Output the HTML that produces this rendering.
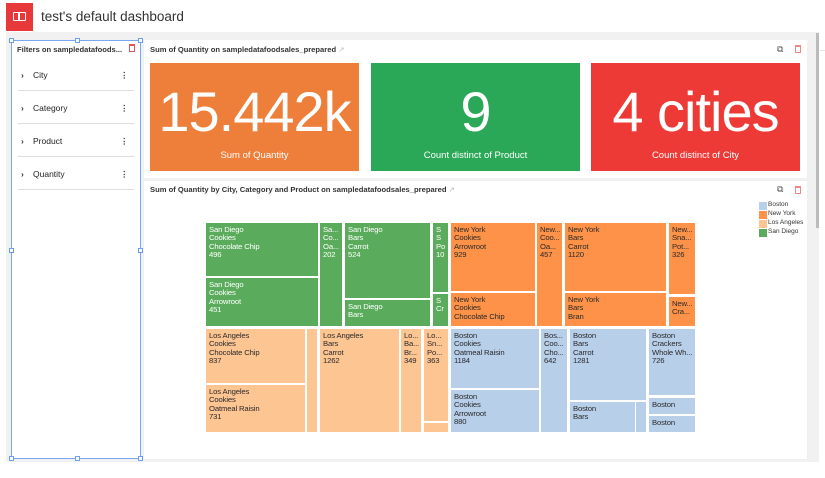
<!DOCTYPE html>
<html><head><meta charset="utf-8"><style>
*{box-sizing:border-box;margin:0;padding:0}
body{width:825px;height:478px;position:relative;background:#fff;font-family:"Liberation Sans",sans-serif;overflow:hidden;color:#222}
.a{position:absolute}
.t{position:absolute;font-size:7.7px;line-height:8.3px;color:#2a2a2a;padding:3px 0 0 3px;overflow:hidden;white-space:nowrap;letter-spacing:-0.15px}
.g{background:#5aab5c}.n{background:#fd9248}.l{background:#fdc592}.b{background:#b8cfea}
.f{position:absolute;left:18px;width:116px;height:33px;border-bottom:1px solid #ddd;font-size:8.5px;font-weight:bold;color:#333}
.f span{position:absolute;top:12px}
.h{position:absolute;width:5px;height:5px;background:#fff;border:1px solid #6aa0f0}
.kpi{position:absolute;top:63px;height:108px;color:#fff;text-align:center}
.kpi .v{font-size:56px;line-height:56px;margin-top:21px;letter-spacing:-1px}
.kpi .c{font-size:9.5px;margin-top:10px}
</style></head><body>
<div class="a" style="left:6px;top:3px;width:27px;height:28px;background:#e8393a"></div>
<div class="a" style="left:13px;top:12px;width:13px;height:9px;border:1.5px solid #fff;border-radius:1px"></div>
<div class="a" style="left:18px;top:13px;width:1.5px;height:7px;background:#fff"></div>
<div class="a" style="left:41px;top:9px;font-size:13.5px;color:#333">test's default dashboard</div>

<div class="a" style="left:6px;top:32px;width:813px;height:430px;background:#f1f1f1"></div>
<div class="a" style="left:816px;top:33px;width:3px;height:195px;background:#bbb"></div>
<div class="a" style="left:820px;top:50px;width:5px;height:1px;background:#e5e5e5"></div>

<div class="a" style="left:11px;top:40px;width:130px;height:419px;background:#fff;border:1px solid #7aa8f0"></div>
<div class="h" style="left:9px;top:38px"></div><div class="h" style="left:75px;top:38px"></div><div class="h" style="left:138px;top:38px"></div>
<div class="h" style="left:9px;top:248px"></div><div class="h" style="left:138px;top:248px"></div>
<div class="h" style="left:9px;top:456px"></div><div class="h" style="left:75px;top:456px"></div><div class="h" style="left:138px;top:456px"></div>
<div class="a" style="left:17px;top:45px;font-size:7.6px;font-weight:bold;color:#333">Filters on sampledatafoods...</div>
<div class="a" style="left:129px;top:44px;width:6px;height:8px;border:1.2px solid #e05555;border-top-width:2px"></div>
<div class="f" style="top:58px"><span style="left:3px">›</span><span style="left:15px;font-weight:normal;color:#222">City</span><span style="left:102px">⋮</span></div>
<div class="f" style="top:91px"><span style="left:3px">›</span><span style="left:15px;font-weight:normal;color:#222">Category</span><span style="left:102px">⋮</span></div>
<div class="f" style="top:124px"><span style="left:3px">›</span><span style="left:15px;font-weight:normal;color:#222">Product</span><span style="left:102px">⋮</span></div>
<div class="f" style="top:157px"><span style="left:3px">›</span><span style="left:15px;font-weight:normal;color:#222">Quantity</span><span style="left:102px">⋮</span></div>

<div class="a" style="left:144px;top:40px;width:663px;height:138px;background:#fff"></div>
<div class="a" style="left:150px;top:45px;font-size:7.6px;font-weight:bold;color:#333">Sum of Quantity on sampledatafoodsales_prepared <span style="color:#bbb;font-weight:normal">&#x2197;</span></div>
<div class="a" style="left:777px;top:44px;font-size:9px;color:#555">⧉</div>
<div class="a" style="left:795px;top:45px;width:6px;height:8px;border:1.2px solid #e88;border-top-width:2px"></div>
<div class="kpi" style="left:150px;width:209px;background:#ee7f3b"><div class="v">15.442k</div><div class="c">Sum of Quantity</div></div>
<div class="kpi" style="left:371px;width:209px;background:#2aa757"><div class="v">9</div><div class="c">Count distinct of Product</div></div>
<div class="kpi" style="left:591px;width:209px;background:#ed3a36"><div class="v">4 cities</div><div class="c">Count distinct of City</div></div>

<div class="a" style="left:144px;top:181px;width:663px;height:278px;background:#fff"></div>
<div class="a" style="left:150px;top:185px;font-size:7.6px;font-weight:bold;color:#333">Sum of Quantity by City, Category and Product on sampledatafoodsales_prepared <span style="color:#bbb;font-weight:normal">&#x2197;</span></div>
<div class="a" style="left:777px;top:184px;font-size:9px;color:#555">⧉</div>
<div class="a" style="left:795px;top:186px;width:6px;height:8px;border:1.2px solid #e88;border-top-width:2px"></div>
<div class="a" style="left:759px;top:202px;width:8px;height:8px;background:#b8cfea"></div><div class="a" style="left:768px;top:201px;font-size:6.5px;color:#333">Boston</div>
<div class="a" style="left:759px;top:211px;width:8px;height:8px;background:#fd9248"></div><div class="a" style="left:768px;top:210px;font-size:6.5px;color:#333">New York</div>
<div class="a" style="left:759px;top:220px;width:8px;height:8px;background:#fdc592"></div><div class="a" style="left:768px;top:219px;font-size:6.5px;color:#333">Los Angeles</div>
<div class="a" style="left:759px;top:229px;width:8px;height:8px;background:#5aab5c"></div><div class="a" style="left:768px;top:228px;font-size:6.5px;color:#333">San Diego</div>

<div class="t g" style="left:206px;top:223px;width:112px;height:53px;color:#fff">San Diego<br>Cookies<br>Chocolate Chip<br>496</div>
<div class="t g" style="left:206px;top:278px;width:112px;height:48px;color:#fff">San Diego<br>Cookies<br>Arrowroot<br>451</div>
<div class="t g" style="left:320px;top:223px;width:22px;height:103px;color:#fff">Sa...<br>Co...<br>Oa...<br>202</div>
<div class="t g" style="left:345px;top:223px;width:85px;height:75px;color:#fff">San Diego<br>Bars<br>Carrot<br>524</div>
<div class="t g" style="left:345px;top:300px;width:85px;height:26px;color:#fff">San Diego<br>Bars</div>
<div class="t g" style="left:433px;top:223px;width:15px;height:69px;color:#fff">S<br>S<br>Po<br>10</div>
<div class="t g" style="left:433px;top:294px;width:15px;height:32px;color:#fff">S<br>Cr</div>

<div class="t l" style="left:206px;top:329px;width:99px;height:54px">Los Angeles<br>Cookies<br>Chocolate Chip<br>837</div>
<div class="t l" style="left:206px;top:385px;width:99px;height:47px">Los Angeles<br>Cookies<br>Oatmeal Raisin<br>731</div>
<div class="t l" style="left:307px;top:329px;width:10px;height:103px"></div>
<div class="t l" style="left:320px;top:329px;width:79px;height:103px">Los Angeles<br>Bars<br>Carrot<br>1262</div>
<div class="t l" style="left:401px;top:329px;width:20px;height:103px">Lo...<br>Ba...<br>Br...<br>349</div>
<div class="t l" style="left:424px;top:329px;width:24px;height:92px">Lo...<br>Sn...<br>Po...<br>363</div>
<div class="t l" style="left:424px;top:423px;width:24px;height:9px"></div>

<div class="t n" style="left:451px;top:223px;width:84px;height:68px">New York<br>Cookies<br>Arrowroot<br>929</div>
<div class="t n" style="left:451px;top:293px;width:84px;height:33px">New York<br>Cookies<br>Chocolate Chip</div>
<div class="t n" style="left:537px;top:223px;width:25px;height:103px">New...<br>Coo...<br>Oa...<br>457</div>
<div class="t n" style="left:565px;top:223px;width:101px;height:68px">New York<br>Bars<br>Carrot<br>1120</div>
<div class="t n" style="left:565px;top:293px;width:101px;height:33px">New York<br>Bars<br>Bran</div>
<div class="t n" style="left:669px;top:223px;width:26px;height:71px">New...<br>Sna...<br>Pot...<br>326</div>
<div class="t n" style="left:669px;top:297px;width:26px;height:29px">New...<br>Cra...</div>

<div class="t b" style="left:451px;top:329px;width:88px;height:59px">Boston<br>Cookies<br>Oatmeal Raisin<br>1184</div>
<div class="t b" style="left:451px;top:390px;width:88px;height:42px">Boston<br>Cookies<br>Arrowroot<br>880</div>
<div class="t b" style="left:541px;top:329px;width:26px;height:103px">Bos...<br>Coo...<br>Cho...<br>642</div>
<div class="t b" style="left:570px;top:329px;width:76px;height:71px">Boston<br>Bars<br>Carrot<br>1281</div>
<div class="t b" style="left:570px;top:402px;width:65px;height:30px">Boston<br>Bars</div>
<div class="t b" style="left:636px;top:402px;width:10px;height:30px"></div>
<div class="t b" style="left:649px;top:329px;width:46px;height:66px">Boston<br>Crackers<br>Whole Wh...<br>726</div>
<div class="t b" style="left:649px;top:398px;width:46px;height:16px">Boston</div>
<div class="t b" style="left:649px;top:416px;width:46px;height:16px">Boston</div>
</body></html>
